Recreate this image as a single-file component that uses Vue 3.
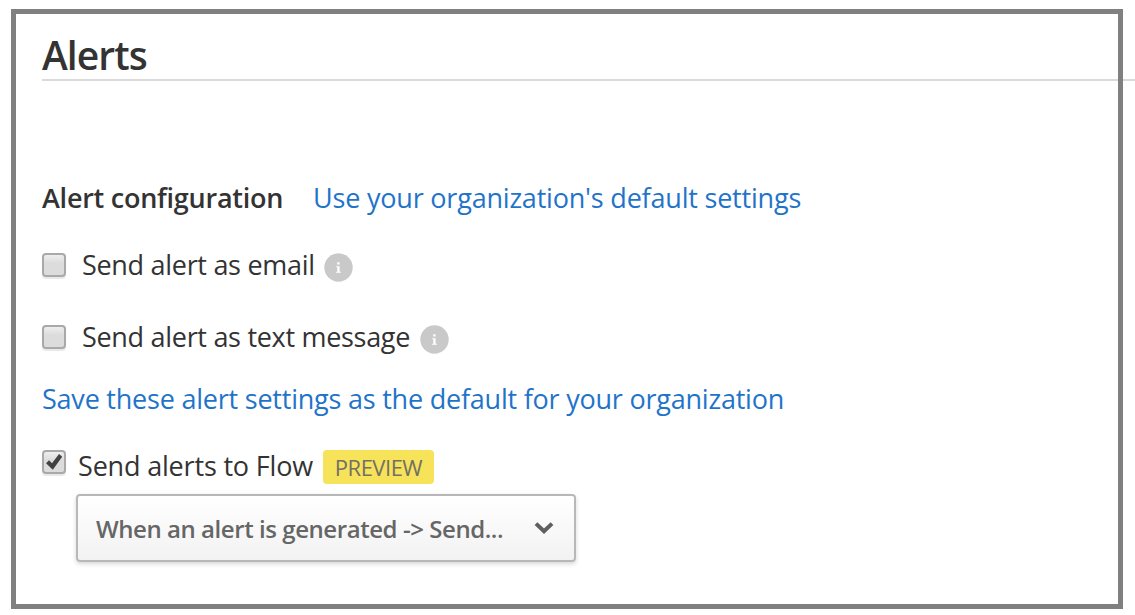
<script setup>
import { ref } from 'vue'

const channels = ref([
  { id: 'email', label: 'Send alert as email', checked: false },
  { id: 'text', label: 'Send alert as text message', checked: false },
])
const flowEnabled = ref(true)
</script>

<template>
  <div class="page">
    <main class="content">
      <h1 class="title">Alerts</h1>
      <div class="config">
        <h2 class="config-title">Alert configuration</h2>
        <a class="link link-use">Use your organization's default settings</a>
      </div>
      <div v-for="c in channels" :key="c.id" class="channel">
        <span class="box" @click="c.checked = !c.checked"></span>
        <span class="label" :class="'label-' + c.id">{{ c.label }}</span>
        <svg class="info" width="29" height="29" viewBox="0 0 29 29">
          <circle cx="14.5" cy="14.5" r="14.2" fill="#c9c9c9" />
          <path d="M13.2 9.2h2.4v2.3h-2.4zM12.2 13.2h3.4v5.6h1.3v1H12v-1h1.3v-4.6h-1.1z" fill="#fff" />
        </svg>
      </div>
      <a class="link link-save">Save these alert settings as the default for your organization</a>
      <div class="flow">
        <span class="box" @click="flowEnabled = !flowEnabled">
          <svg v-if="flowEnabled" width="20" height="20" viewBox="0 0 20 20">
            <path d="M2 11.2 5 8.3 8 11.2 15 2 18.2 4.7 8.8 17.8z" fill="#424242" />
          </svg>
        </span>
        <span class="label label-flow">Send alerts to Flow</span>
        <span class="badge">PREVIEW</span>
      </div>
      <div class="select">
        <span class="select-text">When an alert is generated -&gt; Send...</span>
        <svg class="chevron" width="20" height="14" viewBox="0 0 20 14">
          <path d="M2 2.6 10 10.2 18 2.6" fill="none" stroke="#5f5f5f" stroke-width="4" />
        </svg>
      </div>
    </main>
    <div class="frame"></div>
  </div>
</template>

<style>
html,
body {
  background: #fff;
  overflow: hidden;
}
</style>

<style scoped>
.page {
  position: relative;
  box-sizing: border-box;
  width: 1135px;
  height: 615px;
  padding: 29px 0 0 42px;
  overflow: hidden;
  font-family: "Open Sans", "Noto Sans", sans-serif;
  font-size: 27px;
  line-height: 41px;
  letter-spacing: -0.22px;
  color: #333;
  white-space: nowrap;
}
.frame {
  position: absolute;
  inset: 9px 12px 6px 11px;
  border: 5px solid #808080;
  pointer-events: none;
}
.content {
  display: flex;
  flex-direction: column;
  align-items: flex-start;
}
.title {
  align-self: stretch;
  height: 50px;
  margin: 0 0 96px;
  border-bottom: 2px solid #dadada;
  font-size: 39px;
  line-height: 52px;
  font-weight: 600;
  letter-spacing: -0.95px;
}
.config {
  display: flex;
  height: 40px;
  margin-bottom: 27px;
}
.config-title {
  width: 271px;
  margin: 0;
  font-size: 27px;
  line-height: 42px;
  font-weight: 600;
  letter-spacing: -0.25px;
}
.link {
  height: 40px;
  color: #1f74c9;
}
.link-use {
  letter-spacing: -0.2px;
}
.channel {
  display: flex;
  height: 40px;
  margin-bottom: 32px;
}
.channel + .link {
  margin-top: -10px;
  margin-bottom: 27px;
}
.box {
  flex: none;
  box-sizing: border-box;
  width: 24px;
  height: 24px;
  margin-top: 9px;
  border: 2px solid #a9a9a9;
  border-radius: 4px;
  background: linear-gradient(#eee, #dcdcdc 40%, #dcdcdc);
  box-shadow: 0 2px 1px #e8e8e8;
}
.box svg {
  display: block;
}
.channel .label {
  margin-left: 16px;
  letter-spacing: -0.3px;
}
.label-email {
  width: 242px;
}
.label-text {
  width: 338px;
}
.info {
  margin-top: 9px;
}
.flow {
  display: flex;
  height: 40px;
  margin-bottom: 9px;
}
.flow .box {
  margin-top: 5px;
}
.label-flow {
  width: 245px;
  margin-left: 12px;
  letter-spacing: -0.18px;
}
.badge {
  width: 111px;
  height: 34px;
  margin-top: 5px;
  border-radius: 4px;
  background: #f6e359;
  color: #737067;
  font-size: 22px;
  line-height: 35px;
  letter-spacing: -0.5px;
  text-align: center;
}
.select {
  display: flex;
  box-sizing: border-box;
  width: 500px;
  height: 68px;
  margin-left: 34px;
  padding: 0 20px 0 18px;
  align-items: center;
  justify-content: space-between;
  border: 2px solid #b8b8b8;
  border-radius: 4px;
  background: linear-gradient(#fff, #f2f2f2);
  box-shadow: 0 2px 4px rgba(0, 0, 0, 0.16);
  color: #666;
  font-size: 24px;
  font-weight: 600;
}
.select-text {
  padding-top: 1px;
  line-height: 40px;
  letter-spacing: -0.44px;
}
</style>
